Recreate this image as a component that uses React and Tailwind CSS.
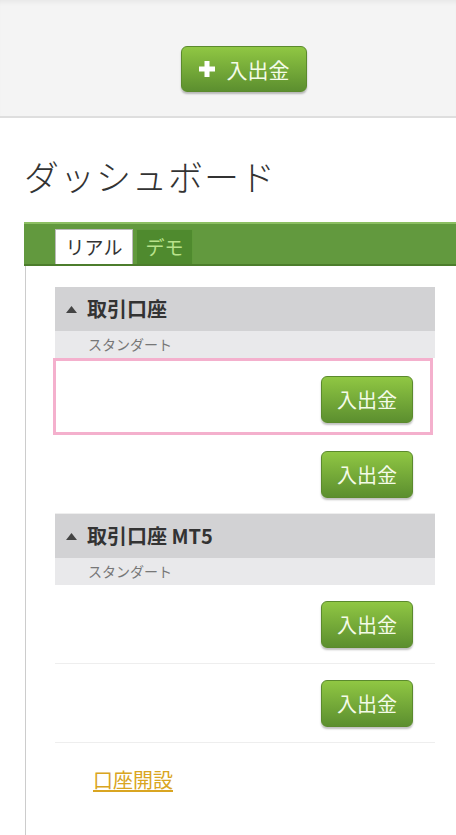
const font = { fontFamily: '"Noto Sans CJK JP", "Noto Sans", sans-serif' }

function DepositButton({ plus = false }) {
  return (
    <button
      className={`flex items-center justify-center gap-3 rounded-[6px] border border-[#5b8a2d] bg-gradient-to-b from-[#90c743] to-[#5c8f2f] text-white shadow-[0_2px_2px_rgba(0,0,0,0.25)] ${
        plus ? 'w-[126px] h-[46px] text-[21px]' : 'w-[92px] h-[47px] text-[20px]'
      }`}
    >
      {plus && (
        <svg width="16" height="16" viewBox="0 0 16 16">
          <path d="M5.5 0h5v5.5H16v5h-5.5V16h-5v-5.5H0v-5h5.5z" fill="#fff" />
        </svg>
      )}
      <span className="leading-none text-[#f4fbe8]">入出金</span>
    </button>
  )
}

function AccountRow({ highlight = false, line = true }) {
  return (
    <div
      className={`flex justify-end ${
        highlight
          ? 'ml-[-2px] mr-[2px] border-[3px] border-[#f4b0cd] pt-[15px] pb-[9px] pr-[17px]'
          : `pt-[16px] pb-[15px] pr-[22px] ${line ? 'border-b border-[#eeeeee]' : ''}`
      }`}
    >
      <DepositButton />
    </div>
  )
}

function Section({ title, children }) {
  return (
    <div>
      <div className="flex items-center h-[44px] bg-[#d2d2d4] pl-[11px]">
        <svg width="11" height="7" viewBox="0 0 11 7" className="mr-[10px]">
          <path d="M5.5 0L11 7H0z" fill="#444" />
        </svg>
        <span className="text-[20px] font-bold text-[#333]">{title}</span>
      </div>
      <div className="h-[27px] bg-[#e9e9eb] pl-[33px] text-[14px] leading-[27px] text-[#777]">
        スタンダート
      </div>
      {children}
    </div>
  )
}

export default function App() {
  return (
    <div className="w-[456px] min-h-[835px] bg-white" style={font}>
      {/* top band */}
      <div className="h-[118px] bg-[#f4f4f4] border-b-2 border-[#dedede] shadow-[inset_0_5px_5px_-3px_rgba(0,0,0,0.06)] flex pl-[181px] pt-[46px]">
        <DepositButton plus />
      </div>

      <h1 className="mt-[34px] pl-[24px] text-[35px] font-light leading-[48px] text-[#333] tracking-[1px]">
        ダッシュボード
      </h1>

      {/* tab bar */}
      <div className="ml-[24px] mt-[22px] h-[44px] bg-[#62993e] border-t-2 border-[#8cbf62] border-b-2 border-b-[#4c7d2c] flex items-end pl-[31px] gap-[3px]">
        <div className="w-[78px] h-[35px] bg-white border border-[#bbbbbb] border-b-0 flex items-center justify-center text-[19px] text-[#333]">
          リアル
        </div>
        <div className="w-[57px] h-[35px] bg-[#4f8a2e] border border-[#5f9a3a] border-b-0 flex items-center justify-center text-[19px] text-[#b9e28c]">
          デモ
        </div>
      </div>

      {/* panel */}
      <div className="ml-[25px] border-l border-[#cccccc] pl-[29px] pr-[21px] pt-[21px] pb-[45px]">
        <Section title="取引口座">
          <AccountRow highlight />
          <AccountRow />
        </Section>
        <Section title="取引口座 MT5">
          <AccountRow />
          <AccountRow />
        </Section>
        <div className="pl-[38px] pt-[22px]">
          <a className="text-[20px] text-[#d9a521] underline underline-offset-2">口座開設</a>
        </div>
      </div>
    </div>
  )
}
